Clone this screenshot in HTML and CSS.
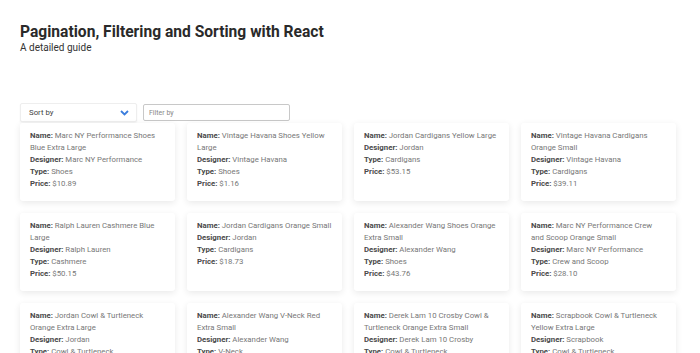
FILE: index.html
```html
<!DOCTYPE html>
<html>
<head>
    <title>Pagination, Filtering and Sorting with React</title>
    <link rel="stylesheet" href="styles.css">
</head>
<body>
    <div class="page">
        <header class="page-header">
            <h1>Pagination, Filtering and Sorting with React</h1>
            <p>A detailed guide</p>
        </header>

        <div class="controls">
            <div class="sort-select">
                <span>Sort by</span>
                <svg width="9" height="6" viewBox="0 0 9 6"><path d="M1 1l3.5 3.5L8 1" fill="none" stroke="#3b7ddd" stroke-width="1.8"/></svg>
            </div>
            <input class="filter-input" type="text" placeholder="Filter by">
        </div>

        <div class="products">
            <div class="card">
                <div><b>Name:</b> Marc NY Performance Shoes Blue Extra Large</div>
                <div><b>Designer:</b> Marc NY Performance</div>
                <div><b>Type:</b> Shoes</div>
                <div><b>Price:</b> $10.89</div>
            </div>
            <div class="card">
                <div><b>Name:</b> Vintage Havana Shoes Yellow Large</div>
                <div><b>Designer:</b> Vintage Havana</div>
                <div><b>Type:</b> Shoes</div>
                <div><b>Price:</b> $1.16</div>
            </div>
            <div class="card">
                <div><b>Name:</b> Jordan Cardigans Yellow Large</div>
                <div><b>Designer:</b> Jordan</div>
                <div><b>Type:</b> Cardigans</div>
                <div><b>Price:</b> $53.15</div>
            </div>
            <div class="card">
                <div><b>Name:</b> Vintage Havana Cardigans Orange Small</div>
                <div><b>Designer:</b> Vintage Havana</div>
                <div><b>Type:</b> Cardigans</div>
                <div><b>Price:</b> $39.11</div>
            </div>
            <div class="card">
                <div><b>Name:</b> Ralph Lauren Cashmere Blue Large</div>
                <div><b>Designer:</b> Ralph Lauren</div>
                <div><b>Type:</b> Cashmere</div>
                <div><b>Price:</b> $50.15</div>
            </div>
            <div class="card">
                <div><b>Name:</b> Jordan Cardigans Orange Small</div>
                <div><b>Designer:</b> Jordan</div>
                <div><b>Type:</b> Cardigans</div>
                <div><b>Price:</b> $18.73</div>
            </div>
            <div class="card">
                <div><b>Name:</b> Alexander Wang Shoes Orange Extra Small</div>
                <div><b>Designer:</b> Alexander Wang</div>
                <div><b>Type:</b> Shoes</div>
                <div><b>Price:</b> $43.76</div>
            </div>
            <div class="card">
                <div><b>Name:</b> Marc NY Performance Crew and Scoop Orange Small</div>
                <div><b>Designer:</b> Marc NY Performance</div>
                <div><b>Type:</b> Crew and Scoop</div>
                <div><b>Price:</b> $28.10</div>
            </div>
            <div class="card">
                <div><b>Name:</b> Jordan Cowl &amp; Turtleneck Orange Extra Large</div>
                <div><b>Designer:</b> Jordan</div>
                <div><b>Type:</b> Cowl &amp; Turtleneck</div>
                <div><b>Price:</b> $22.40</div>
            </div>
            <div class="card">
                <div><b>Name:</b> Alexander Wang V-Neck Red Extra Small</div>
                <div><b>Designer:</b> Alexander Wang</div>
                <div><b>Type:</b> V-Neck</div>
                <div><b>Price:</b> $31.52</div>
            </div>
            <div class="card">
                <div><b>Name:</b> Derek Lam 10 Crosby Cowl &amp; Turtleneck Orange Extra Small</div>
                <div><b>Designer:</b> Derek Lam 10 Crosby</div>
                <div><b>Type:</b> Cowl &amp; Turtleneck</div>
                <div><b>Price:</b> $47.08</div>
            </div>
            <div class="card">
                <div><b>Name:</b> Scrapbook Cowl &amp; Turtleneck Yellow Extra Large</div>
                <div><b>Designer:</b> Scrapbook</div>
                <div><b>Type:</b> Cowl &amp; Turtleneck</div>
                <div><b>Price:</b> $12.95</div>
            </div>
        </div>
    </div>
</body>
</html>
```

FILE: styles.css
```css
body {
    margin: 0;
    padding: 0;
    background: #fff;
    font-family: Roboto, "Liberation Sans", sans-serif;
    color: #333;
}

.page {
    padding: 23px 22px 0 20px;
}

.page-header h1 {
    margin: 0;
    font-size: 15.6px;
    font-weight: 700;
    color: #2a2a2a;
    line-height: 19px;
}

.page-header p {
    margin: 0;
    font-size: 10px;
    line-height: 12px;
    color: #333;
}

.controls {
    display: flex;
    align-items: center;
    gap: 6px;
    margin-top: 49px;
}

.sort-select {
    width: 117px;
    height: 19px;
    box-sizing: border-box;
    padding: 0 7px 0 8px;
    display: flex;
    align-items: center;
    justify-content: space-between;
    background: #fff;
    border: 1px solid #eee;
    border-radius: 2px;
    box-shadow: 0 1px 2px rgba(0, 0, 0, 0.06);
    font-size: 7.8px;
    color: #444;
}

.filter-input {
    width: 147px;
    height: 17px;
    box-sizing: border-box;
    margin: 0;
    padding: 0 5px;
    border: 1px solid #c8c8c8;
    border-radius: 2px;
    font-family: Roboto, "Liberation Sans", sans-serif;
    font-size: 7px;
    outline: none;
}

.filter-input::placeholder {
    color: #888;
}

.products {
    display: grid;
    grid-template-columns: repeat(4, 155px);
    column-gap: 12px;
    row-gap: 12px;
    grid-auto-rows: 78px;
    margin-top: 1px;
}

.card {
    background: #fff;
    border-radius: 3px;
    box-shadow: 0 2px 7px rgba(0, 0, 0, 0.09);
    padding: 7px 9px 7px 10px;
    font-size: 7.8px;
    line-height: 12px;
    color: #777;
}

.card b {
    color: #4a4a4a;
    font-weight: 700;
}
```
